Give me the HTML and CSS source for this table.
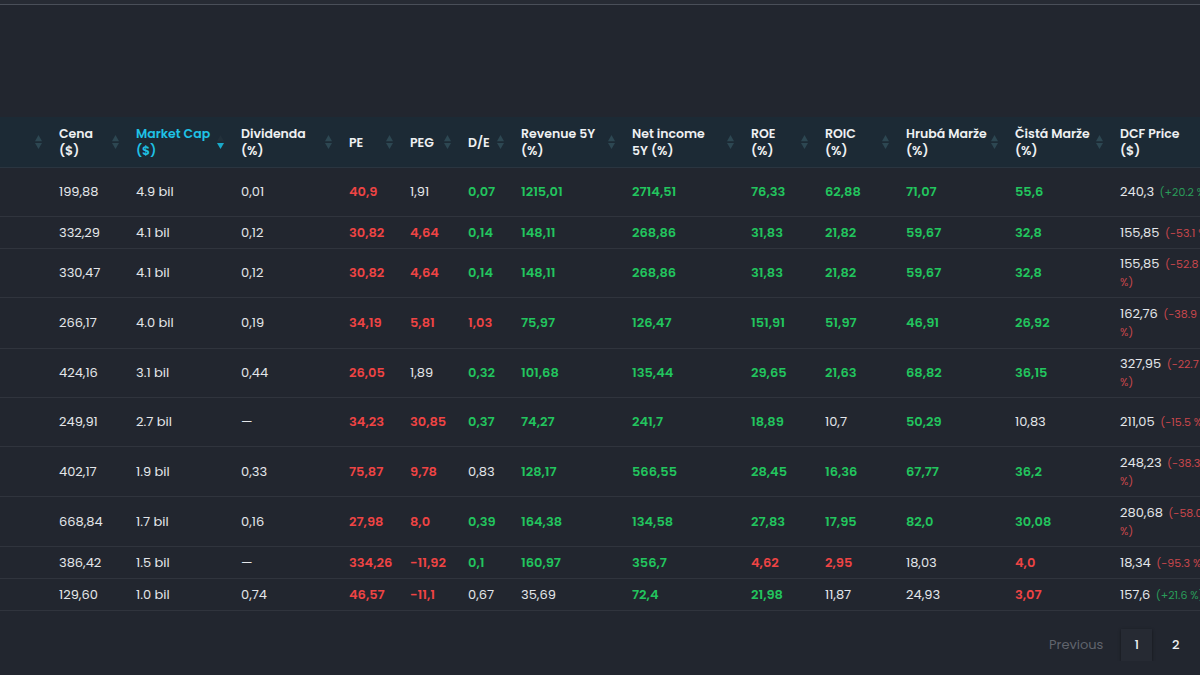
FILE: index.html
```html
<!DOCTYPE html>
<html lang="cs">
<head>
<meta charset="utf-8">
<title>Screener</title>
<link rel="stylesheet" href="styles.css">
</head>
<body>
<div class="topbar"></div>
<div class="viewport">
  <div class="table">
    <div class="thead">
      <div class="th stub"><svg class="sort" viewBox="0 0 8 16"><path class="up" d="M4 0L8 7H0Z"/><path class="down" d="M0 9H8L4 16Z"/></svg></div>
      <div class="th"><span>Cena<br>($)</span><svg class="sort" viewBox="0 0 8 16"><path class="up" d="M4 0L8 7H0Z"/><path class="down" d="M0 9H8L4 16Z"/></svg></div>
      <div class="th active"><span>Market Cap<br>($)</span><svg class="sort" viewBox="0 0 8 16"><path class="up" d="M4 0L8 7H0Z"/><path class="down" d="M0 9H8L4 16Z"/></svg></div>
      <div class="th"><span>Dividenda<br>(%)</span><svg class="sort" viewBox="0 0 8 16"><path class="up" d="M4 0L8 7H0Z"/><path class="down" d="M0 9H8L4 16Z"/></svg></div>
      <div class="th"><span>PE</span><svg class="sort" viewBox="0 0 8 16"><path class="up" d="M4 0L8 7H0Z"/><path class="down" d="M0 9H8L4 16Z"/></svg></div>
      <div class="th"><span>PEG</span><svg class="sort" viewBox="0 0 8 16"><path class="up" d="M4 0L8 7H0Z"/><path class="down" d="M0 9H8L4 16Z"/></svg></div>
      <div class="th"><span>D/E</span><svg class="sort" viewBox="0 0 8 16"><path class="up" d="M4 0L8 7H0Z"/><path class="down" d="M0 9H8L4 16Z"/></svg></div>
      <div class="th"><span>Revenue 5Y<br>(%)</span><svg class="sort" viewBox="0 0 8 16"><path class="up" d="M4 0L8 7H0Z"/><path class="down" d="M0 9H8L4 16Z"/></svg></div>
      <div class="th"><span>Net income<br>5Y (%)</span><svg class="sort" viewBox="0 0 8 16"><path class="up" d="M4 0L8 7H0Z"/><path class="down" d="M0 9H8L4 16Z"/></svg></div>
      <div class="th"><span>ROE<br>(%)</span><svg class="sort" viewBox="0 0 8 16"><path class="up" d="M4 0L8 7H0Z"/><path class="down" d="M0 9H8L4 16Z"/></svg></div>
      <div class="th"><span>ROIC<br>(%)</span><svg class="sort" viewBox="0 0 8 16"><path class="up" d="M4 0L8 7H0Z"/><path class="down" d="M0 9H8L4 16Z"/></svg></div>
      <div class="th"><span>Hrubá Marže<br>(%)</span><svg class="sort" viewBox="0 0 8 16"><path class="up" d="M4 0L8 7H0Z"/><path class="down" d="M0 9H8L4 16Z"/></svg></div>
      <div class="th"><span>Čistá Marže<br>(%)</span><svg class="sort" viewBox="0 0 8 16"><path class="up" d="M4 0L8 7H0Z"/><path class="down" d="M0 9H8L4 16Z"/></svg></div>
      <div class="th"><span>DCF Price<br>($)</span></div>
    </div>

    <div class="row h49">
      <div class="td"></div><div class="td">199,88</div><div class="td">4.9 bil</div><div class="td">0,01</div>
      <div class="td neg">40,9</div><div class="td">1,91</div><div class="td pos">0,07</div><div class="td pos">1215,01</div>
      <div class="td pos">2714,51</div><div class="td pos">76,33</div><div class="td pos">62,88</div><div class="td pos">71,07</div>
      <div class="td pos">55,6</div><div class="td dcf"><div><span class="price">240,3</span> <span class="chg up-chg">(+20.2&nbsp;%)</span></div></div>
    </div>
    <div class="row h32">
      <div class="td"></div><div class="td">332,29</div><div class="td">4.1 bil</div><div class="td">0,12</div>
      <div class="td neg">30,82</div><div class="td neg">4,64</div><div class="td pos">0,14</div><div class="td pos">148,11</div>
      <div class="td pos">268,86</div><div class="td pos">31,83</div><div class="td pos">21,82</div><div class="td pos">59,67</div>
      <div class="td pos">32,8</div><div class="td dcf"><div><span class="price">155,85</span> <span class="chg down-chg">(-53.1&nbsp;%)</span></div></div>
    </div>
    <div class="row h49">
      <div class="td"></div><div class="td">330,47</div><div class="td">4.1 bil</div><div class="td">0,12</div>
      <div class="td neg">30,82</div><div class="td neg">4,64</div><div class="td pos">0,14</div><div class="td pos">148,11</div>
      <div class="td pos">268,86</div><div class="td pos">31,83</div><div class="td pos">21,82</div><div class="td pos">59,67</div>
      <div class="td pos">32,8</div><div class="td dcf"><div><span class="price">155,85</span> <span class="chg down-chg">(-52.8<br>%)</span></div></div>
    </div>
    <div class="row h51">
      <div class="td"></div><div class="td">266,17</div><div class="td">4.0 bil</div><div class="td">0,19</div>
      <div class="td neg">34,19</div><div class="td neg">5,81</div><div class="td neg">1,03</div><div class="td pos">75,97</div>
      <div class="td pos">126,47</div><div class="td pos">151,91</div><div class="td pos">51,97</div><div class="td pos">46,91</div>
      <div class="td pos">26,92</div><div class="td dcf"><div><span class="price">162,76</span> <span class="chg down-chg">(-38.9<br>%)</span></div></div>
    </div>
    <div class="row h49">
      <div class="td"></div><div class="td">424,16</div><div class="td">3.1 bil</div><div class="td">0,44</div>
      <div class="td neg">26,05</div><div class="td">1,89</div><div class="td pos">0,32</div><div class="td pos">101,68</div>
      <div class="td pos">135,44</div><div class="td pos">29,65</div><div class="td pos">21,63</div><div class="td pos">68,82</div>
      <div class="td pos">36,15</div><div class="td dcf"><div><span class="price">327,95</span> <span class="chg down-chg">(-22.7<br>%)</span></div></div>
    </div>
    <div class="row h49">
      <div class="td"></div><div class="td">249,91</div><div class="td">2.7 bil</div><div class="td">—</div>
      <div class="td neg">34,23</div><div class="td neg">30,85</div><div class="td pos">0,37</div><div class="td pos">74,27</div>
      <div class="td pos">241,7</div><div class="td pos">18,89</div><div class="td">10,7</div><div class="td pos">50,29</div>
      <div class="td">10,83</div><div class="td dcf"><div><span class="price">211,05</span> <span class="chg down-chg">(-15.5&nbsp;%)</span></div></div>
    </div>
    <div class="row h50">
      <div class="td"></div><div class="td">402,17</div><div class="td">1.9 bil</div><div class="td">0,33</div>
      <div class="td neg">75,87</div><div class="td neg">9,78</div><div class="td">0,83</div><div class="td pos">128,17</div>
      <div class="td pos">566,55</div><div class="td pos">28,45</div><div class="td pos">16,36</div><div class="td pos">67,77</div>
      <div class="td pos">36,2</div><div class="td dcf"><div><span class="price">248,23</span> <span class="chg down-chg">(-38.3<br>%)</span></div></div>
    </div>
    <div class="row h50">
      <div class="td"></div><div class="td">668,84</div><div class="td">1.7 bil</div><div class="td">0,16</div>
      <div class="td neg">27,98</div><div class="td neg">8,0</div><div class="td pos">0,39</div><div class="td pos">164,38</div>
      <div class="td pos">134,58</div><div class="td pos">27,83</div><div class="td pos">17,95</div><div class="td pos">82,0</div>
      <div class="td pos">30,08</div><div class="td dcf"><div><span class="price">280,68</span> <span class="chg down-chg">(-58.0<br>%)</span></div></div>
    </div>
    <div class="row h32">
      <div class="td"></div><div class="td">386,42</div><div class="td">1.5 bil</div><div class="td">—</div>
      <div class="td neg">334,26</div><div class="td neg">-11,92</div><div class="td pos">0,1</div><div class="td pos">160,97</div>
      <div class="td pos">356,7</div><div class="td neg">4,62</div><div class="td neg">2,95</div><div class="td">18,03</div>
      <div class="td neg">4,0</div><div class="td dcf"><div><span class="price">18,34</span> <span class="chg down-chg">(-95.3&nbsp;%)</span></div></div>
    </div>
    <div class="row h32">
      <div class="td"></div><div class="td">129,60</div><div class="td">1.0 bil</div><div class="td">0,74</div>
      <div class="td neg">46,57</div><div class="td neg">-11,1</div><div class="td">0,67</div><div class="td">35,69</div>
      <div class="td pos">72,4</div><div class="td pos">21,98</div><div class="td">11,87</div><div class="td">24,93</div>
      <div class="td neg">3,07</div><div class="td dcf"><div><span class="price">157,6</span> <span class="chg up-chg">(+21.6&nbsp;%)</span></div></div>
    </div>
  </div>

  <nav class="pager">
    <span class="prev">Previous</span>
    <span class="page current">1</span>
    <span class="page">2</span>
  </nav>
</div>
</body>
</html>
```

FILE: styles.css
```css
html, body {
  margin: 0;
  padding: 0;
  background: #22262f;
}
body {
  font-family: "Poppins", "Inter", "Open Sans", sans-serif;
  color: #e4e6ea;
  font-size: 13px;
  width: 1200px;
  height: 675px;
  overflow: hidden;
}
.topbar {
  height: 4px;
  background: #272b34;
  border-bottom: 1px solid #4a4f59;
}
.viewport {
  width: 1200px;
  overflow: hidden;
  padding-top: 112px;
}
.table {
  width: 1290px;
}
.thead, .row {
  display: grid;
  grid-template-columns: 48px 77px 105px 108px 61px 58px 53px 111px 119px 74px 81px 109px 105px 181px;
}
.thead {
  height: 51px;
  background: #1c2a35;
  border-bottom: 1px solid #2a3540;
  box-sizing: border-box;
}
.th {
  display: flex;
  align-items: center;
  justify-content: space-between;
  padding: 0 6px 0 11px;
  font-weight: 600;
  font-size: 12.5px;
  line-height: 17px;
  color: #eef0f2;
}
.th.stub {
  justify-content: flex-end;
}
.th.active {
  color: #1fc2e6;
}
.sort {
  width: 7px;
  height: 16px;
  flex: none;
}
.sort path {
  fill: #2d4752;
}
.th.active .sort .up {
  fill: #22303a;
}
.th.active .sort .down {
  fill: #1aa9c9;
}
.row {
  box-sizing: border-box;
  border-bottom: 1px solid #30343d;
}
.h32 { height: 32px; }
.h49 { height: 49px; }
.h50 { height: 50px; }
.h51 { height: 51px; }
.td {
  display: flex;
  align-items: center;
  padding-left: 11px;
  white-space: nowrap;
  font-weight: 400;
  color: #e4e6ea;
}
.td.pos {
  color: #22c55e;
  font-weight: 600;
}
.td.neg {
  color: #ef4444;
  font-weight: 600;
}
.dcf {
  line-height: 17px;
}
.chg {
  font-size: 11px;
  margin-left: 2px;
}
.up-chg { color: #2a9d5a; }
.down-chg { color: #c8474c; }
.pager {
  display: flex;
  align-items: center;
  width: max-content;
  margin-top: 18px;
  margin-left: 1049px;
  font-size: 13px;
}
.prev {
  flex: none;
  color: #60646d;
  margin-right: 18px;
}
.page {
  flex: none;
  width: 31px;
  height: 32px;
  display: flex;
  align-items: center;
  justify-content: center;
  color: #eef0f2;
  font-weight: 500;
  margin-right: 8px;
}
.page.current {
  background: #262a33;
  box-shadow: 0 1px 3px rgba(0,0,0,0.45);
}
```
